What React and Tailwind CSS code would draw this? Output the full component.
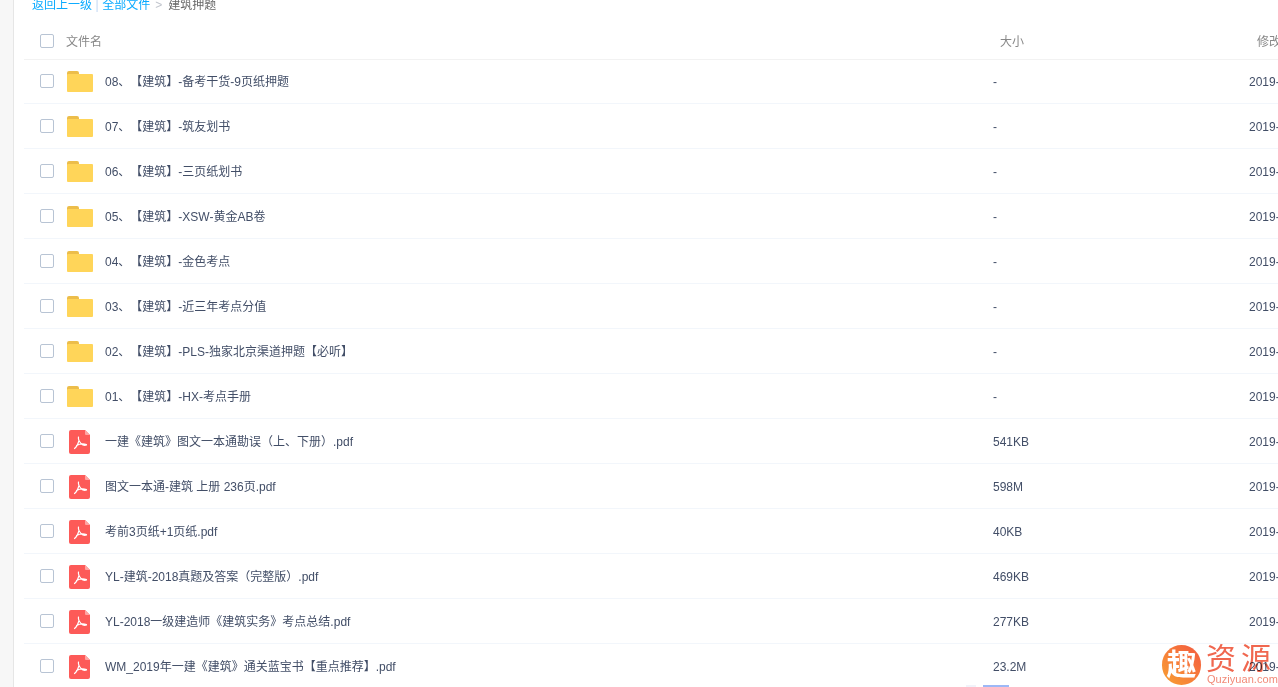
import React from 'react';

const rows = [
  { name: '08、【建筑】-备考干货-9页纸押题', size: '-', type: 'folder' },
  { name: '07、【建筑】-筑友划书', size: '-', type: 'folder' },
  { name: '06、【建筑】-三页纸划书', size: '-', type: 'folder' },
  { name: '05、【建筑】-XSW-黄金AB卷', size: '-', type: 'folder' },
  { name: '04、【建筑】-金色考点', size: '-', type: 'folder' },
  { name: '03、【建筑】-近三年考点分值', size: '-', type: 'folder' },
  { name: '02、【建筑】-PLS-独家北京渠道押题【必听】', size: '-', type: 'folder' },
  { name: '01、【建筑】-HX-考点手册', size: '-', type: 'folder' },
  { name: '一建《建筑》图文一本通勘误（上、下册）.pdf', size: '541KB', type: 'pdf' },
  { name: '图文一本通-建筑 上册 236页.pdf', size: '598M', type: 'pdf' },
  { name: '考前3页纸+1页纸.pdf', size: '40KB', type: 'pdf' },
  { name: 'YL-建筑-2018真题及答案（完整版）.pdf', size: '469KB', type: 'pdf' },
  { name: 'YL-2018一级建造师《建筑实务》考点总结.pdf', size: '277KB', type: 'pdf' },
  { name: 'WM_2019年一建《建筑》通关蓝宝书【重点推荐】.pdf', size: '23.2M', type: 'pdf' },
];

const FolderIcon = () => (
  <svg className="mt-[1px]" width="26" height="21" viewBox="0 0 26 21">
    <path d="M0 2a2 2 0 0 1 2-2h8a2 2 0 0 1 2 2v2H0z" fill="#ecbd4a" />
    <path d="M1 3h24a1 1 0 0 1 1 1v16a1 1 0 0 1-1 1H1a1 1 0 0 1-1-1V4a1 1 0 0 1 1-1z" fill="#ffd559" />
  </svg>
);

const PdfIcon = () => (
  <svg className="ml-[2px] mt-[2px]" width="21" height="24" viewBox="0 0 21 24">
    <path d="M2 0h14l5 5v17a2 2 0 0 1-2 2H2a2 2 0 0 1-2-2V2a2 2 0 0 1 2-2z" fill="#fd5a58" />
    <path d="M16 0l5 5h-4a1 1 0 0 1-1-1z" fill="#fea5a3" />
    <path
      d="M9.500 7C9 9 10 11 12 13.500c1.500 1.500 4 2 5.500 1.500M10 10.500c-1 3.500-2.500 6.500-4.500 8M7.500 15.500c3-1.500 6.500-2 10-1"
      fill="none"
      stroke="#ffffff"
      strokeWidth="1.200"
      strokeLinecap="round"
    />
  </svg>
);

const Checkbox = () => (
  <span className="w-[14px] h-[14px] shrink-0 rounded-[2px] border border-[#b8c4d4] bg-white" />
);

const Row = ({ row }) => (
  <div className="flex items-center h-[45px] border-b border-[#f2f6fb] text-xs text-[#424e67] [text-spacing-trim:space-all]">
    <div className="w-[43px] pl-[16px] flex items-center shrink-0">
      <Checkbox />
    </div>
    <div className="w-[38px] flex shrink-0">
      {row.type === 'folder' ? <FolderIcon /> : <PdfIcon />}
    </div>
    <div className="w-[888px] pt-[2px] shrink-0 whitespace-nowrap">{row.name}</div>
    <div className="w-[256px] pt-[2px] shrink-0">{row.size}</div>
    <div className="pt-[2px] shrink-0 whitespace-nowrap">2019-</div>
  </div>
);

const App = () => {
  return (
    <div
      className="relative w-[1278px] h-[687px] overflow-hidden bg-white flex"
      style={{ fontFamily: '"Liberation Sans", "Noto Sans CJK SC", sans-serif' }}
    >
      <div className="w-[14px] shrink-0 bg-[#f7f7f7] border-r border-[#e6e6e6]" />
      <div className="flex-1 min-w-0 pl-[10px]">
        <div className="h-[21px] -mt-[6px] pl-[8px] flex items-center text-xs text-[#666666] whitespace-nowrap">
          <span className="text-[#09aaff]">返回上一级</span>
          <span className="mx-[3.500px] text-[#c4d8f4]">|</span>
          <span className="text-[#09aaff]">全部文件</span>
          <span className="ml-[5px] mr-[6px] text-[#c0c4cc]">&gt;</span>
          <span>建筑押题</span>
        </div>
        <div className="flex items-center h-[45px] pt-[8px] border-b border-[#f2f2f2] text-xs text-[#888888]">
          <div className="w-[42px] pl-[16px] flex items-center shrink-0">
            <Checkbox />
          </div>
          <div className="w-[934px] pt-[2px] shrink-0">文件名</div>
          <div className="w-[257px] pt-[2px] shrink-0">大小</div>
          <div className="pt-[2px] shrink-0 whitespace-nowrap">修改日期</div>
        </div>
        <div className="-mt-[1px]">
          {rows.map((row) => (
            <Row key={row.name} row={row} />
          ))}
        </div>
      </div>

      {/* watermark */}
      <div className="absolute left-[1162px] top-[645px] w-[39px] h-[40px] rounded-full bg-gradient-to-tr from-[#f8a030] to-[#f2563f] flex items-center justify-center text-[30px] leading-none font-bold text-white">
        趣
      </div>
      <div className="absolute left-[1206px] top-[639px] text-[30px] leading-[40px] tracking-[5px] text-[#f0674f] whitespace-nowrap mix-blend-multiply">
        资源
      </div>
      <div className="absolute left-[1207px] top-[672px] text-[11px] leading-[14px] tracking-[0.05px] text-[#f28a78] whitespace-nowrap">
        Quziyuan.com
      </div>
      <div className="absolute left-[966px] top-[685px] w-[10px] h-[2px] bg-[#f1f3fa]" />
      <div className="absolute left-[983px] top-[685px] w-[26px] h-[2px] bg-[#9db8f6]" />
    </div>
  );
};

export default App;
